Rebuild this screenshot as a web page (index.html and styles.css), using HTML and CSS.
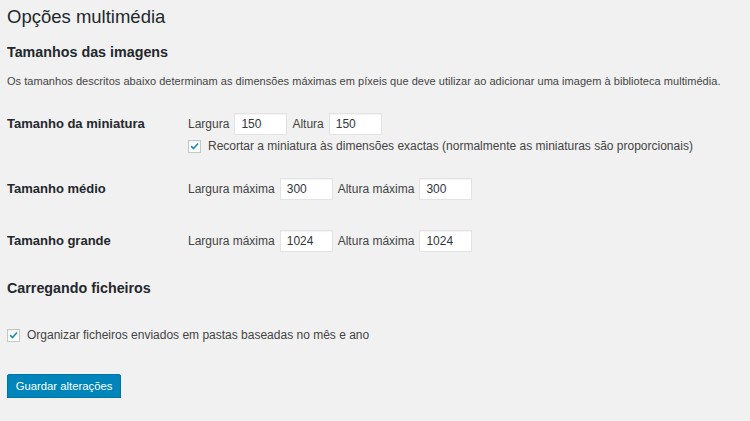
FILE: index.html
```html
<!DOCTYPE html>
<html lang="pt">
<head>
<meta charset="utf-8">
<title>Opções multimédia</title>
<link rel="stylesheet" href="styles.css">
</head>
<body>
<div class="wrap">
  <h1 class="title">Opções multimédia</h1>
  <h2 class="section">Tamanhos das imagens</h2>
  <p class="desc">Os tamanhos descritos abaixo determinam as dimensões máximas em píxeis que deve utilizar ao adicionar uma imagem à biblioteca multimédia.</p>

  <div class="form-table">
    <div class="row row-thumb">
      <div class="label">Tamanho da miniatura</div>
      <div class="fields">
        <div class="line">
          <span class="flabel">Largura</span><span class="input">150</span>
          <span class="flabel">Altura</span><span class="input">150</span>
        </div>
        <div class="check-line">
          <span class="checkbox"><svg viewBox="0 0 12 12" width="12" height="12"><path d="M2.3 6.2 L4.9 8.8 L9.8 3.2" fill="none" stroke="#1e8cbe" stroke-width="1.8"/></svg></span>
          <span class="check-text">Recortar a miniatura às dimensões exactas (normalmente as miniaturas são proporcionais)</span>
        </div>
      </div>
    </div>
    <div class="row row-medium">
      <div class="label">Tamanho médio</div>
      <div class="fields">
        <div class="line">
          <span class="flabel">Largura máxima</span><span class="input">300</span>
          <span class="flabel">Altura máxima</span><span class="input">300</span>
        </div>
      </div>
    </div>
    <div class="row row-large">
      <div class="label">Tamanho grande</div>
      <div class="fields">
        <div class="line">
          <span class="flabel">Largura máxima</span><span class="input">1024</span>
          <span class="flabel">Altura máxima</span><span class="input">1024</span>
        </div>
      </div>
    </div>
  </div>

  <h2 class="section section-upload">Carregando ficheiros</h2>
  <div class="check-line upload-line">
    <span class="checkbox"><svg viewBox="0 0 12 12" width="12" height="12"><path d="M2.3 6.2 L4.9 8.8 L9.8 3.2" fill="none" stroke="#1e8cbe" stroke-width="1.8"/></svg></span>
    <span class="check-text">Organizar ficheiros enviados em pastas baseadas no mês e ano</span>
  </div>

  <div class="actions">
    <button class="button-primary" type="button">Guardar alterações</button>
  </div>
</div>
</body>
</html>
```

FILE: styles.css
```css
html, body {
  margin: 0;
  padding: 0;
  background: #f1f1f1;
}

body {
  font-family: "Liberation Sans", Arial, sans-serif;
  color: #444;
  font-size: 12px;
}

.wrap {
  padding: 0 7px;
  display: flex;
  flex-direction: column;
  align-items: flex-start;
}

.title {
  margin: 4px 0 0;
  font-size: 18.5px;
  font-weight: 400;
  line-height: 26px;
  color: #23282d;
}

.section {
  margin: 13px 0 0;
  font-size: 14.3px;
  font-weight: 700;
  line-height: 18px;
  color: #23282d;
}

.desc {
  margin: 12px 0 0;
  font-size: 11px;
  line-height: 16px;
  letter-spacing: 0.04px;
  color: #444;
}

.form-table {
  margin-top: 24px;
  display: flex;
  flex-direction: column;
}

.row {
  display: grid;
  grid-template-columns: 181px auto;
  align-items: start;
}

.row-medium { margin-top: 24px; }
.row-large { margin-top: 30px; }

.label {
  font-size: 13px;
  font-weight: 700;
  color: #23282d;
  line-height: 22px;
}

.fields {
  display: flex;
  flex-direction: column;
}

.line {
  display: flex;
  align-items: center;
  height: 22px;
}

.flabel {
  font-size: 12px;
  color: #444;
  margin-right: 5px;
}

.input {
  box-sizing: border-box;
  width: 53px;
  height: 22px;
  background: #fff;
  border: 1px solid #e3e3e3;
  box-shadow: inset 0 1px 1px rgba(0,0,0,0.05);
  padding: 0 6px;
  line-height: 20px;
  font-size: 12px;
  color: #32373c;
  margin-right: 5px;
}

.check-line {
  display: flex;
  align-items: center;
  margin-top: 3px;
  height: 16px;
}

.checkbox {
  box-sizing: border-box;
  width: 13px;
  height: 13px;
  background: #fff;
  border: 1px solid #c4c7ca;
  box-shadow: inset 0 1px 2px rgba(0,0,0,0.08);
  display: flex;
  align-items: center;
  justify-content: center;
  margin-right: 7px;
}

.checkbox svg { display: block; }

.check-text {
  font-size: 12px;
  color: #444;
}

.section-upload {
  margin-top: 27px;
}

.upload-line {
  margin-top: 30px;
}

.actions {
  margin-top: 31px;
}

.button-primary {
  box-sizing: border-box;
  width: 114px;
  height: 24px;
  background: #0085ba;
  border: 1px solid #0073aa;
  border-radius: 2px;
  box-shadow: 0 1px 0 #006799;
  color: #fff;
  font-family: "Liberation Sans", Arial, sans-serif;
  font-size: 11.3px;
  padding: 0;
  cursor: pointer;
}
```
